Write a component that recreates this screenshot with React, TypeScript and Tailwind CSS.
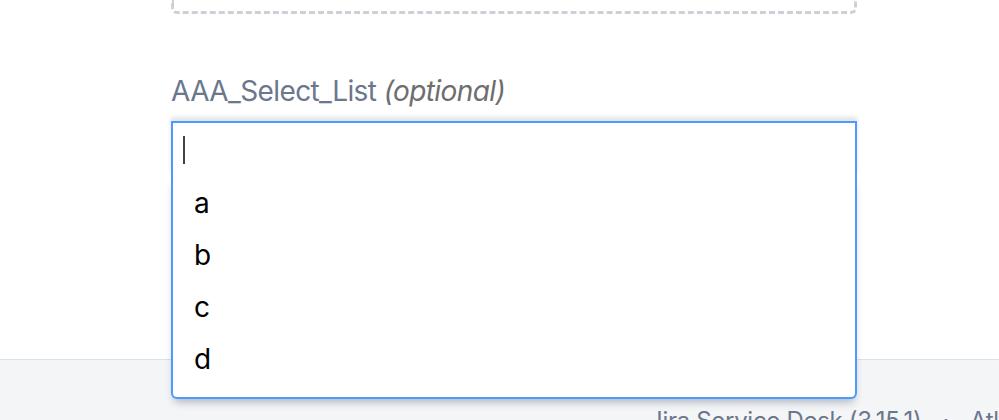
import React from 'react';

const options = ['a', 'b', 'c', 'd'];

const SelectField = () => {
  return (
    <div className="relative w-[686px]">
      <div className="relative z-20 flex h-[56px] items-center border-2 border-b-0 border-[#4c9aff] bg-white pl-[10px] shadow-[0_-4px_4px_rgba(9,30,66,0.12)]">
        <span className="block h-[28px] w-[2px] bg-[#444]" />
      </div>
      <ul className="absolute left-0 right-0 top-full z-10 rounded-b-[6px] border-2 border-t-0 border-[#4c9aff] bg-white pb-[12px] shadow-[0_6px_8px_-3px_rgba(9,30,66,0.3)]">
        {options.map((opt) => (
          <li key={opt} className="flex h-[52px] items-center pl-[21px] text-[28px] text-black">
            {opt}
          </li>
        ))}
      </ul>
    </div>
  );
};

export default function App() {
  return (
    <div className="flex h-[420px] w-full flex-col overflow-hidden bg-white font-['Inter',sans-serif] tracking-[-0.6px]">
      <main className="h-[359px] shrink-0 pl-[171px]">
        <div className="h-[14px] w-[686px] rounded-b-[6px] border-[3px] border-t-0 border-dashed border-[#cdd1d7]" />
        <label className="mt-[57px] block h-[40px] text-[28px] leading-[40px] text-[#6b778c]">
          AAA_Select_List <em className="text-[#6e6e6e]">(optional)</em>
        </label>
        <div className="mt-[10px]">
          <SelectField />
        </div>
      </main>
      <footer className="flex-1 border-t border-[#dfe1e6] bg-[#f4f5f7] pl-[649px] pt-[41px]">
        <p className="flex gap-[21px] whitespace-nowrap text-[24px] leading-[40px] tracking-[-0.3px] text-[#6b778c]">
          <span>Jira Service Desk (3.15.1)</span>
          <span>·</span>
          <span>Atlassian</span>
        </p>
      </footer>
    </div>
  );
}
